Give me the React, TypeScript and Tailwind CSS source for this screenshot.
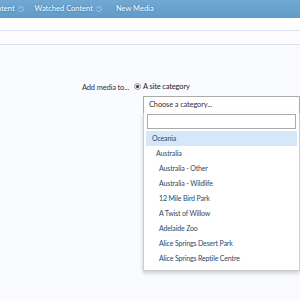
import { ChevronDown } from "lucide-react"

const items = [
  { label: "Oceania", indent: "pl-[6px]", active: true },
  { label: "Australia", indent: "pl-[10px]" },
  { label: "Australia - Other", indent: "pl-[13px]" },
  { label: "Australia - Wildlife", indent: "pl-[13px]" },
  { label: "12 Mile Bird Park", indent: "pl-[13px]" },
  { label: "A Twist of Willow", indent: "pl-[13px]" },
  { label: "Adelaide Zoo", indent: "pl-[13px]" },
  { label: "Alice Springs Desert Park", indent: "pl-[13px]" },
  { label: "Alice Springs Reptile Centre", indent: "pl-[13px]" },
]

function NavArrow() {
  return (
    <span className="ml-[3px] inline-flex h-[6px] w-[6px] items-center justify-center rounded-full bg-[#8bb8dc]">
      <ChevronDown className="h-[5px] w-[5px] text-[#2d5f8f]" strokeWidth={4} />
    </span>
  )
}

export default function App() {
  return (
    <div className="h-[300px] w-[300px] overflow-hidden bg-[#fafbfe] font-['Lato',sans-serif] text-[7.5px] tracking-[-0.15px]">
      <div className="flex h-[18px] items-center gap-[11px] bg-gradient-to-b from-[#72a9d3] to-[#609bc8] text-[7.5px] tracking-normal text-white [text-shadow:0_0_2px_rgba(30,60,100,0.6)]">
        <span className="-ml-[3px] flex items-center">ntent<NavArrow /></span>
        <span className="flex items-center">Watched Content<NavArrow /></span>
        <span className="ml-[3px]">New Media</span>
      </div>
      <div className="h-[13px] border-b border-[#dbe4ee] bg-white" />
      <div className="h-[14px] border-b border-[#dbe4ee] bg-[#fcfcff]" />

      <div className="mt-[37px] flex items-start">
        <div className="w-[129px] text-right text-[#333]">Add media to...</div>
        <div className="ml-[5px] flex-1">
          <div className="flex h-[9px] items-center text-[#222]">
            <span className="flex h-[7px] w-[7px] items-center justify-center rounded-full border border-[#999] bg-[#eee]">
              <span className="h-[3px] w-[3px] rounded-full bg-[#333]" />
            </span>
            <span className="ml-[2px]">A site category</span>
          </div>
          <div className="relative mt-[5px] ml-[9px]">
            <div className="flex h-[18px] items-center border border-[#aaa] bg-white pl-[5px] text-[#333]">
              Choose a category...
            </div>
            <div className="-mt-[1px] border border-[#ccc] border-t-0 bg-white pb-[4px] text-[7px] shadow-[0_2px_4px_rgba(0,0,0,0.2)]">
              <div className="px-[3px] pt-[1px]">
                <div className="h-[15px] border border-[#aaa] bg-white" />
              </div>
              <ul className="mt-[2px] px-[2px] text-[#2a4a6c]">
                {items.map((it) => (
                  <li
                    key={it.label}
                    className={`flex h-[15px] items-center ${it.indent} ${it.active ? "bg-[#d5e7f8]" : ""}`}
                  >
                    {it.label}
                  </li>
                ))}
              </ul>
            </div>
          </div>
        </div>
      </div>
    </div>
  )
}
